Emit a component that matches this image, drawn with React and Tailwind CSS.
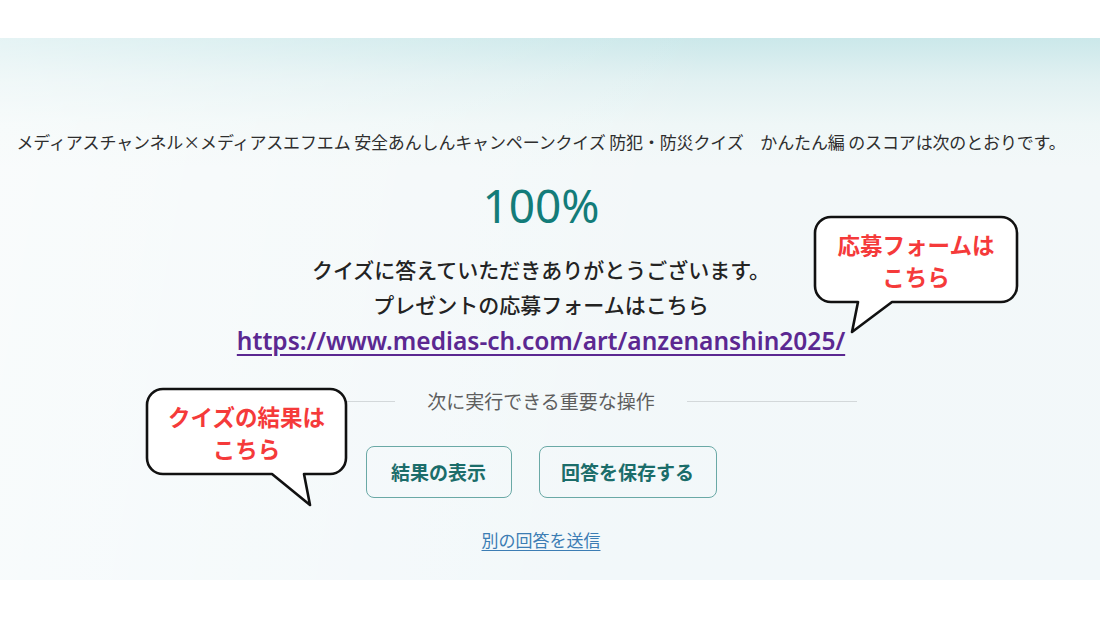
const JP = 'font-["Noto_Sans_CJK_JP","Noto_Sans",sans-serif]'

function Bubble({ className, box, path, w, h, lines }) {
  return (
    <div className={`absolute ${className}`} style={{ width: w, height: h }}>
      <svg width={w} height={h} className="absolute inset-0">
        <path d={path} fill="#fff" stroke="#111" strokeWidth="2.6" strokeLinejoin="round" />
      </svg>
      <div
        className={`absolute flex flex-col items-center justify-center text-[22.5px] leading-[32px] font-bold text-[#f53a3a] ${JP}`}
        style={box}
      >
        {lines.map((l) => (
          <span key={l}>{l}</span>
        ))}
      </div>
    </div>
  )
}

export default function App() {
  return (
    <div className="relative w-[1100px] h-[618px] bg-white pt-[38px] overflow-hidden">
      <div className="h-[542px] pr-[18px] flex flex-col items-center bg-[linear-gradient(100deg,rgba(255,255,255,0.5)_0%,rgba(255,255,255,0)_60%),linear-gradient(180deg,#cbe8ea_0%,#e2f1f2_8%,#eff7f7_16%,#f3f8f9_24%,#f2f8fa_100%)]">
        <p className={`mt-[92px] whitespace-nowrap text-[17px] leading-6 tracking-[-0.15px] text-[#2e2e2e] ${JP}`}>
          メディアスチャンネル×メディアスエフエム 安全あんしんキャンペーンクイズ 防犯・防災クイズ　かんたん編 のスコアは次のとおりです。
        </p>

        <div className='mt-[23px] text-[46px] leading-[56px] text-[#137c79] font-["Noto_Sans",sans-serif]'>100%</div>

        <div className={`mt-[19px] flex flex-col items-center text-[21px] leading-[35px] font-medium text-[#232323] ${JP}`}>
          <span>クイズに答えていただきありがとうございます。</span>
          <span>プレゼントの応募フォームはこちら</span>
        </div>

        <a
          href="#"
          className='leading-[38px] text-[24.5px] font-semibold text-[#5b2891] underline underline-offset-[4px] font-["Noto_Sans",sans-serif]'
        >
          https://www.medias-ch.com/art/anzenanshin2025/
        </a>

        <div className="mt-[29px] w-[632px] flex items-center gap-8">
          <div className="flex-1 h-px bg-[#d3d8da]" />
          <span className={`text-[19px] leading-6 text-[#5e5e5e] ${JP}`}>次に実行できる重要な操作</span>
          <div className="flex-1 h-px bg-[#d3d8da]" />
        </div>

        <div className={`mt-[33px] flex gap-[27px] ${JP}`}>
          <button className="h-[52px] w-[146px] rounded-lg border-[1.5px] border-[#6aa9a6] text-[19px] font-bold text-[#1b6d6a]">
            結果の表示
          </button>
          <button className="h-[52px] w-[178px] rounded-lg border-[1.5px] border-[#6aa9a6] text-[19px] font-bold text-[#1b6d6a]">
            回答を保存する
          </button>
        </div>

        <a href="#" className={`mt-[30px] text-[17px] leading-6 text-[#3c7db4] underline underline-offset-[3px] ${JP}`}>
          別の回答を送信
        </a>
      </div>

      <Bubble
        className="left-[812px] top-[214px]"
        w={208}
        h={122}
        path="M 19 3 H 189 A 16 16 0 0 1 205 19 V 72 A 16 16 0 0 1 189 88 H 80 L 40 118 L 46 88 H 19 A 16 16 0 0 1 3 72 V 19 A 16 16 0 0 1 19 3 Z"
        box={{ left: 3, top: 3, width: 202, height: 85 }}
        lines={['応募フォームは', 'こちら']}
      />
      <Bubble
        className="left-[144px] top-[386px]"
        w={206}
        h={122}
        path="M 19 3 H 186 A 16 16 0 0 1 202 19 V 72 A 16 16 0 0 1 186 88 H 160 L 166 119 L 128 88 H 19 A 16 16 0 0 1 3 72 V 19 A 16 16 0 0 1 19 3 Z"
        box={{ left: 3, top: 3, width: 199, height: 85 }}
        lines={['クイズの結果は', 'こちら']}
      />
    </div>
  )
}
